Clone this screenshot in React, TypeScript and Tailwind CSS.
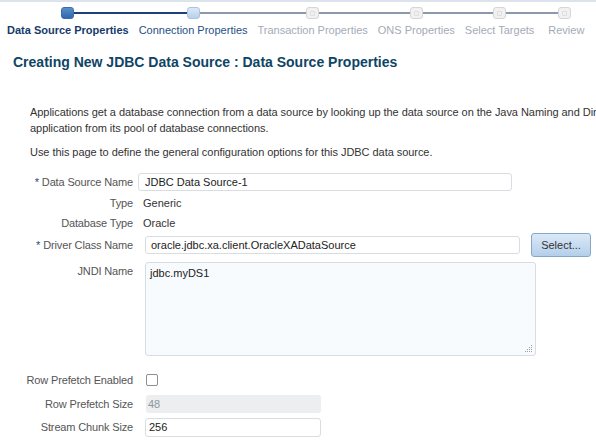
import React from "react";

const steps = [
  { label: "Data Source Properties", state: "current" },
  { label: "Connection Properties", state: "next" },
  { label: "Transaction Properties", state: "off" },
  { label: "ONS Properties", state: "off" },
  { label: "Select Targets", state: "off" },
  { label: "Review", state: "off" },
];

function StepIcon({ state }: { state: string }) {
  if (state === "current")
    return <div className="w-[13px] h-[12px] rounded-[3px] border border-[#3b6ea8] bg-gradient-to-b from-[#5a8fcb] to-[#2f68ad] shrink-0" />;
  if (state === "next")
    return <div className="w-[13px] h-[12px] rounded-[3px] border border-[#a9c4e0] bg-gradient-to-b from-[#dce9f6] to-[#b7d0ea] shrink-0" />;
  return (
    <div className="w-[13px] h-[12px] rounded-[3px] border border-[#d6d6d6] bg-[#f1f1f1] flex items-center justify-center shrink-0">
      <div className="w-[5px] h-[5px] rounded-[1px] border border-[#dedede]" />
    </div>
  );
}

function Train() {
  return (
    <div className="border-t-2 border-[#dde3ea] flex pl-[2px] pt-[4px]">
      {steps.map((s, i) => {
        const last = i === steps.length - 1;
        const leftColor = i === 0 ? "bg-transparent" : i === 1 ? "bg-[#1d3f7a]" : "bg-[#8c98ab]";
        const rightColor = last ? "bg-transparent" : i === 0 ? "bg-[#1d3f7a]" : "bg-[#8c98ab]";
        const text =
          s.state === "current"
            ? "font-bold text-[#163b6b]"
            : s.state === "next"
            ? "text-[#254f86]"
            : "text-[#a3abb7]";
        return (
          <div key={s.label} className={`flex flex-col items-stretch ${last ? "pl-[9px] pr-[5px]" : "px-[5px]"}`}>
            <div className={`flex items-center h-[14px] ${last ? "-ml-[9px] -mr-[5px]" : "-mx-[5px]"}`}>
              <div className={`flex-1 h-[2px] ${leftColor}`} />
              <StepIcon state={s.state} />
              <div className={`flex-1 h-[2px] ${rightColor}`} />
            </div>
            <div className={`text-[11px] leading-[14px] mt-[3px] whitespace-nowrap ${text}`}>{s.label}</div>
          </div>
        );
      })}
    </div>
  );
}

function Label({ children, req }: { children: React.ReactNode; req?: boolean }) {
  return (
    <div className="w-[133px] shrink-0 text-right text-[11px] tracking-[-0.15px] text-[#555] whitespace-nowrap">
      {req && <span className="text-[#1f4b82] mr-[3px]">*</span>}
      {children}
    </div>
  );
}

export default function App() {
  return (
    <div className="w-[596px] h-[447px] overflow-hidden bg-white font-['Liberation_Sans',Arial,sans-serif]">
      <Train />
      <h1 className="mt-[16px] ml-[13px] text-[14px] font-bold text-[#0e4565] leading-[18px]">
        Creating New JDBC Data Source : Data Source Properties
      </h1>

      <div className="ml-[30px] mt-[33px] w-[566px] overflow-hidden text-[11px] tracking-[-0.05px] text-[#333] leading-[16px] whitespace-nowrap">
        <p>
          Applications get a database connection from a data source by looking up the data source on the Java Naming and Directory Interface (JNDI) tree and then requesting a connection to the
        </p>
        <p>application from its pool of database connections.</p>
        <p className="mt-[8px]">Use this page to define the general configuration options for this JDBC data source.</p>
      </div>

      <div className="mt-[13px] flex flex-col">
        <div className="flex items-center h-[18px]">
          <Label req>Data Source Name</Label>
          <div className="ml-[5px] w-[374px] h-[18px] border border-[#d7dde3] rounded-[3px] bg-white px-[6px] flex items-center text-[11px] text-[#222]">
            JDBC Data Source-1
          </div>
        </div>

        <div className="flex items-center h-[18px] mt-[3px]">
          <Label>Type</Label>
          <div className="ml-[10px] text-[11px] text-[#333]">Generic</div>
        </div>

        <div className="flex items-center h-[18px] mt-[2px]">
          <Label>Database Type</Label>
          <div className="ml-[10px] text-[11px] text-[#333]">Oracle</div>
        </div>

        <div className="flex items-center h-[24px] mt-[1px]">
          <Label req>Driver Class Name</Label>
          <div className="ml-[12px] w-[375px] h-[18px] border border-[#d7dde3] rounded-[3px] bg-white px-[5px] flex items-center text-[11px] text-[#222]">
            oracle.jdbc.xa.client.OracleXADataSource
          </div>
          <div className="ml-[11px] w-[60px] h-[24px] border border-[#87a7c9] rounded-[3px] bg-gradient-to-b from-[#dbe9f7] to-[#b4cfea] flex items-center justify-center text-[11px] text-[#333]">
            Select...
          </div>
        </div>

        <div className="flex items-start mt-[5px]">
          <div className="pt-[1px]">
            <Label>JNDI Name</Label>
          </div>
          <div className="relative ml-[12px] w-[391px] h-[94px] border border-[#d7dde3] rounded-[3px] bg-[#f8fbfd] px-[4px] pt-[3px] text-[11px] text-[#222] leading-[15px]">
            jdbc.myDS1
            <svg className="absolute right-[2px] bottom-[2px]" width="8" height="8" viewBox="0 0 8 8">
              <g fill="#9aa3ad">
                <rect x="6" y="0" width="1" height="1" />
                <rect x="4" y="2" width="1" height="1" />
                <rect x="6" y="2" width="1" height="1" />
                <rect x="2" y="4" width="1" height="1" />
                <rect x="4" y="4" width="1" height="1" />
                <rect x="6" y="4" width="1" height="1" />
                <rect x="0" y="6" width="1" height="1" />
                <rect x="2" y="6" width="1" height="1" />
                <rect x="4" y="6" width="1" height="1" />
                <rect x="6" y="6" width="1" height="1" />
              </g>
            </svg>
          </div>
        </div>

        <div className="flex items-center h-[14px] mt-[17px]">
          <Label>Row Prefetch Enabled</Label>
          <div className="ml-[13px] w-[12px] h-[12px] border border-[#8e8e8e] rounded-[2px] bg-white" />
        </div>

        <div className="flex items-center h-[18px] mt-[8px]">
          <Label>Row Prefetch Size</Label>
          <div className="ml-[13px] w-[175px] h-[18px] rounded-[3px] bg-[#eceeef] px-[2px] flex items-center text-[11px] text-[#8e959c]">
            48
          </div>
        </div>

        <div className="flex items-center h-[19px] mt-[5px]">
          <Label>Stream Chunk Size</Label>
          <div className="ml-[12px] w-[176px] h-[19px] border border-[#d7dde3] rounded-[3px] bg-white px-[3px] flex items-center text-[11px] text-[#222]">
            256
          </div>
        </div>
      </div>
    </div>
  );
}
